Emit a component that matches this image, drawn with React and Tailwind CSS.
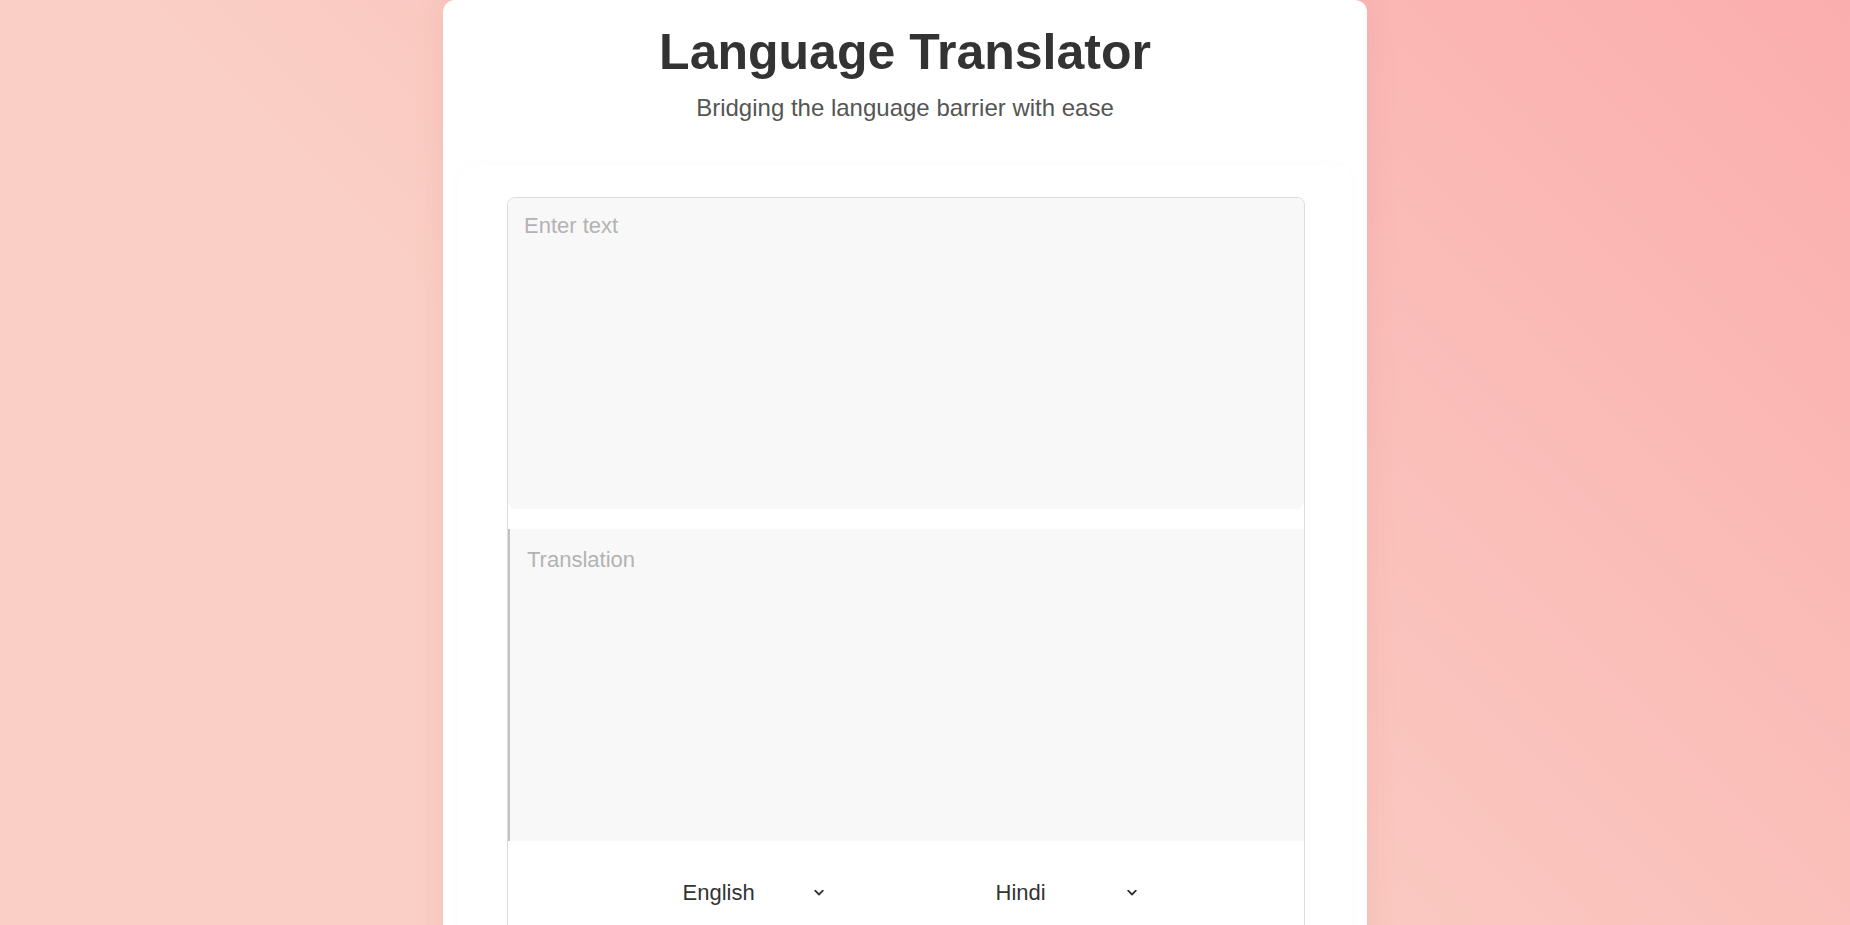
import React from "react";

function Chevron() {
  return (
    <svg width="10" height="7" viewBox="0 0 10 7" className="pointer-events-none absolute right-[6px] top-1/2 -translate-y-1/2" fill="none">
      <path d="M1.2 1.2 L5 5 L8.8 1.2" stroke="#333" strokeWidth="1.8" strokeLinecap="round" strokeLinejoin="round" />
    </svg>
  );
}

function LangSelect({ value, options }) {
  return (
    <div className="relative w-[160px]">
      <select
        defaultValue={value}
        className="w-full appearance-none bg-transparent pl-[13px] pr-[24px] text-[22px] leading-[28px] text-[#333] outline-none"
      >
        {options.map((o) => (
          <option key={o}>{o}</option>
        ))}
      </select>
      <Chevron />
    </div>
  );
}

export default function App() {
  const langs = ["English", "Hindi", "French", "Spanish", "German"];
  return (
    <div className="h-[925px] w-full overflow-hidden bg-[linear-gradient(225deg,#fbaeae_0%,#facfc5_62%,#facfc5_100%)] font-['Liberation_Sans',Arial,sans-serif]">
      <div className="ml-[443px] w-[924px] min-h-[1000px] rounded-t-xl bg-white px-[15px] shadow-[0_0_30px_rgba(190,90,80,0.12)]">
        <h1 className="pt-[23px] text-center text-[50px] font-bold leading-[58px] text-[#333]">Language Translator</h1>
        <p className="mt-[13px] text-center text-[24px] leading-[28px] text-[#555]">Bridging the language barrier with ease</p>
        <div className="mt-[43px] rounded-2xl pl-[49px] pr-[47px] pt-[32px] shadow-[0_0_12px_rgba(0,0,0,0.018)]">
          <div className="flex flex-col rounded-lg border border-[#dcdcdc] pb-[40px]">
            <textarea
              placeholder="Enter text"
              className="h-[311px] resize-none rounded-lg bg-[#f8f8f8] px-[16px] pt-[15px] text-[22px] leading-[26px] text-[#333] outline-none placeholder:text-[#b3b3b3]"
            />
            <textarea
              readOnly
              placeholder="Translation"
              className="mt-[20px] h-[312px] resize-none border-l-2 border-[#c2c2c2] bg-[#f8f8f8] px-[17px] pt-[18px] text-[22px] leading-[26px] text-[#333] outline-none placeholder:text-[#b3b3b3]"
            />
            <div className="mt-[38px] flex justify-center gap-[153px]">
              <LangSelect value="English" options={langs} />
              <LangSelect value="Hindi" options={langs} />
            </div>
          </div>
        </div>
      </div>
    </div>
  );
}
